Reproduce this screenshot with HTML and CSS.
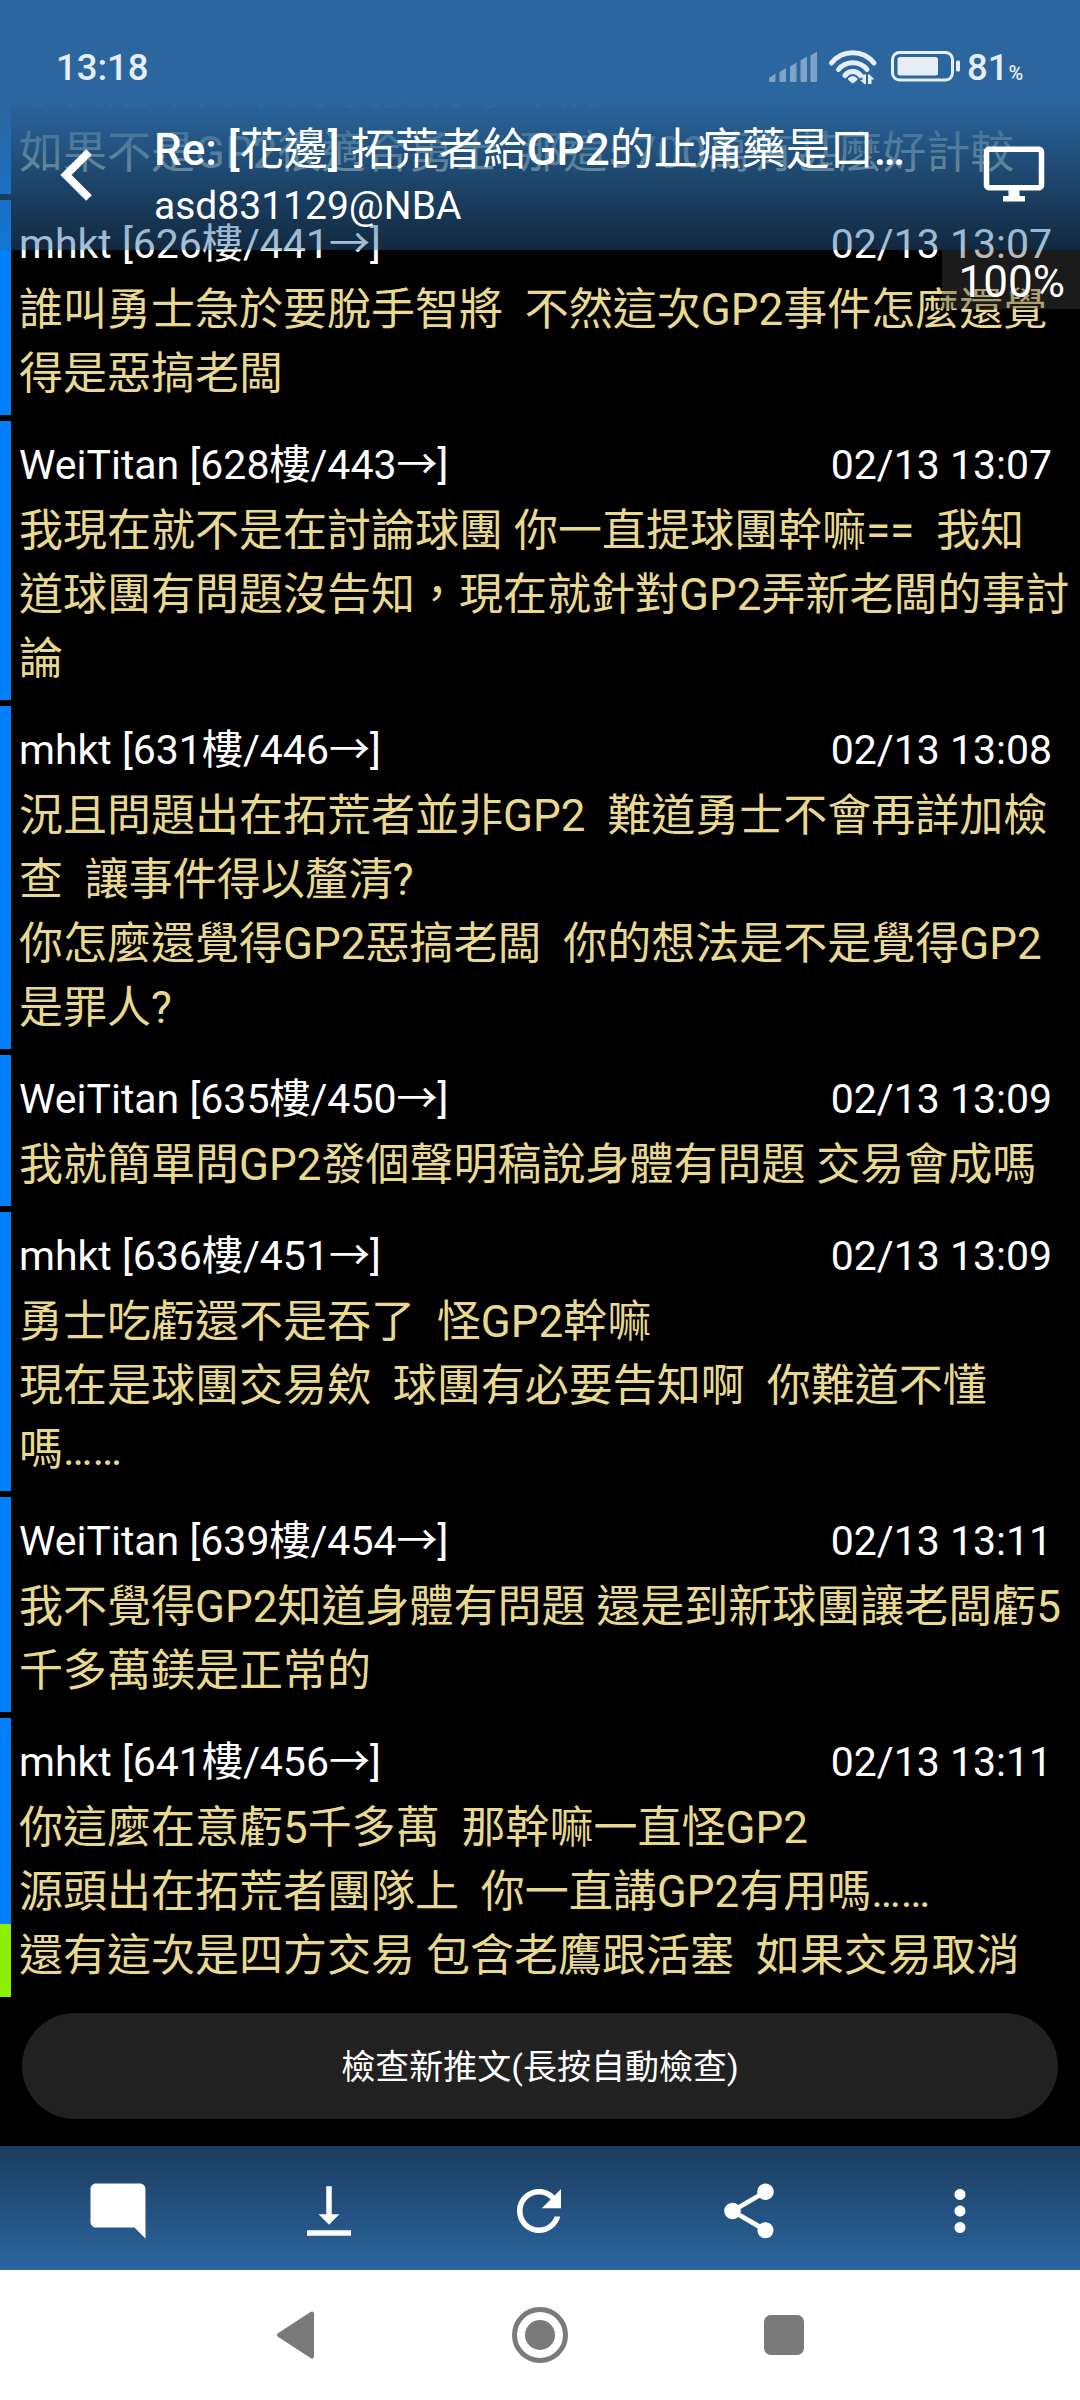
FILE: index.html
```html
<!DOCTYPE html>
<html lang="zh-Hant">
<head>
<meta charset="utf-8">
<title>NBA</title>
<link rel="stylesheet" href="styles.css">
</head>
<body>
<div class="screen">
  <main class="list">
    <article class="post post-first">
      <p class="post-text">于資尼年內未買 就要有家年院
如果不是GP2很適合勇士  那這5700萬有甚麼好計較</p>
    </article>
    <article class="post">
      <header class="post-head"><span>mhkt [626樓/441→]</span><time>02/13 13:07</time></header>
      <p class="post-text">誰叫勇士急於要脫手智將  不然這次GP2事件怎麼還覺
得是惡搞老闆</p>
    </article>
    <article class="post">
      <header class="post-head"><span>WeiTitan [628樓/443→]</span><time>02/13 13:07</time></header>
      <p class="post-text">我現在就不是在討論球團 你一直提球團幹嘛==  我知
道球團有問題沒告知，現在就針對GP2弄新老闆的事討
論</p>
    </article>
    <article class="post">
      <header class="post-head"><span>mhkt [631樓/446→]</span><time>02/13 13:08</time></header>
      <p class="post-text">況且問題出在拓荒者並非GP2  難道勇士不會再詳加檢
查  讓事件得以釐清?
你怎麼還覺得GP2惡搞老闆  你的想法是不是覺得GP2
是罪人?</p>
    </article>
    <article class="post">
      <header class="post-head"><span>WeiTitan [635樓/450→]</span><time>02/13 13:09</time></header>
      <p class="post-text">我就簡單問GP2發個聲明稿說身體有問題 交易會成嗎</p>
    </article>
    <article class="post">
      <header class="post-head"><span>mhkt [636樓/451→]</span><time>02/13 13:09</time></header>
      <p class="post-text">勇士吃虧還不是吞了  怪GP2幹嘛
現在是球團交易欸  球團有必要告知啊  你難道不懂
嗎……</p>
    </article>
    <article class="post">
      <header class="post-head"><span>WeiTitan [639樓/454→]</span><time>02/13 13:11</time></header>
      <p class="post-text">我不覺得GP2知道身體有問題 還是到新球團讓老闆虧5
千多萬鎂是正常的</p>
    </article>
    <article class="post">
      <header class="post-head"><span>mhkt [641樓/456→]</span><time>02/13 13:11</time></header>
      <p class="post-text">你這麼在意虧5千多萬  那幹嘛一直怪GP2
源頭出在拓荒者團隊上  你一直講GP2有用嗎……
還有這次是四方交易 包含老鷹跟活塞  如果交易取消</p>
    </article>
    <div class="progress"></div>
    <div class="zoom-badge">100%</div>
  </main>

  <div class="check"><button class="check-btn">檢查新推文(長按自動檢查)</button></div>

  <nav class="toolbar">
    <svg class="tool" viewBox="0 0 24 24"><path d="M21.99 4c0-1.100-.89-2-1.990-2H4c-1.100 0-2 .9-2 2v12c0 1.100.9 2 2 2h14l4 4-.01-18z"/></svg>
    <svg class="tool" viewBox="0 0 24 24"><path d="M15.800 13.200H13V3h-2v10.200H8.200L12 17zM4 19v2h16v-2H4z"/></svg>
    <svg class="tool" viewBox="0 0 24 24"><path d="M17.65 6.350C16.200 4.900 14.210 4 12 4c-4.420 0-7.990 3.580-7.990 8s3.570 8 7.990 8c3.730 0 6.840-2.550 7.730-6h-2.080c-.82 2.330-3.040 4-5.650 4-3.310 0-6-2.690-6-6s2.690-6 6-6c1.660 0 3.140.69 4.220 1.780L13 11h7V4l-2.350 2.350z"/></svg>
    <svg class="tool" viewBox="0 0 24 24"><path d="M18 16.080c-.76 0-1.440.3-1.960.77L8.910 12.700c.05-.23.09-.46.09-.7s-.04-.47-.09-.7l7.050-4.110c.54.5 1.250.81 2.040.81 1.660 0 3-1.340 3-3s-1.340-3-3-3-3 1.340-3 3c0 .24.04.47.09.7L8.040 9.810C7.500 9.310 6.790 9 6 9c-1.660 0-3 1.340-3 3s1.340 3 3 3c.79 0 1.500-.31 2.040-.81l7.120 4.160c-.05.21-.08.43-.08.65 0 1.610 1.310 2.920 2.920 2.920s2.920-1.310 2.920-2.920-1.310-2.920-2.920-2.920z"/></svg>
    <svg class="tool" viewBox="0 0 24 24"><path d="M12 8c1.100 0 2-.9 2-2s-.9-2-2-2-2 .9-2 2 .9 2 2 2zm0 2c-1.100 0-2 .9-2 2s.9 2 2 2 2-.9 2-2-.9-2-2-2zm0 6c-1.100 0-2 .9-2 2s.9 2 2 2 2-.9 2-2-.9-2-2-2z"/></svg>
  </nav>

  <footer class="sysnav">
    <svg class="sys" viewBox="0 0 60 60"><path d="M13 30L46 8.500V51.500Z" stroke-width="4" stroke-linejoin="round"/></svg>
    <svg class="sys" viewBox="0 0 60 60"><circle cx="30" cy="30" r="25.500" fill="none" stroke-width="5"/><circle cx="30" cy="30" r="15"/></svg>
    <svg class="sys" viewBox="0 0 60 60"><rect x="10" y="10" width="40" height="40" rx="7"/></svg>
  </footer>

  <div class="top">
    <div class="status">
      <span class="clock">13:18</span>
      <svg class="status-icons" viewBox="0 0 196 42">
        <g class="dim">
          <path d="M2.500 36q-1.500 0-1.500-1.500v-2.500l6.500-4.500v7q0 1.500-1.500 1.500z"/>
          <path d="M13 36q-1.500 0-1.500-1.500v-8.500l6.500-4v12.500q0 1.500-1.500 1.500z"/>
          <path d="M23.500 36q-1.500 0-1.500-1.500v-14l6.500-4v18q0 1.500-1.500 1.500z"/>
          <path d="M34 36q-1.500 0-1.500-1.500v-20l6.500-4v24q0 1.500-1.500 1.500z"/>
          <path d="M44 36q-1.500 0-1.500-1.500v-25l6.500-4v29q0 1.500-1.500 1.500z"/>
        </g>
        <g class="wave">
          <path d="M63.500 17A27 27 0 0 1 106 17"/>
          <path d="M70.500 23.500A18.500 18.500 0 0 1 99 23.500"/>
          <path d="M77 29.500A9.500 9.500 0 0 1 92.500 29.500"/>
        </g>
        <path class="lit" d="M80 32.500q4.700-5 9.500 0q1 1-4.700 5q-5.800-4-4.800-5z"/>
        <path class="lit" d="M92 34h2.500v-5.500h3.500v9.500h-1.500zM100 38v-9.500h1.500l5 5H103.500v4.500z"/>
        <rect class="cell" x="124.500" y="6.500" width="60" height="27.500" rx="7"/>
        <rect class="lit" x="129.500" y="11" width="40.500" height="18.500" rx="2.500"/>
        <rect class="lit" x="188" y="14.500" width="4" height="11" rx="1.500"/>
      </svg>
      <span class="pct">81<small>%</small></span>
    </div>
    <div class="appbar">
      <svg class="back" viewBox="0 0 34 52"><path d="M29 3L6 26L29 49"/></svg>
      <div class="titles">
        <h1>Re: [<span>花邊</span>] <span>拓荒者給</span>GP2<span>的止痛藥是口</span>…</h1>
        <h2>asd831129@NBA</h2>
      </div>
      <svg class="monitor" viewBox="0 0 24 24"><path d="M21 2H3c-1.100 0-2 .9-2 2v12c0 1.100.9 2 2 2h7v2H8v2h8v-2h-2v-2h7c1.100 0 2-.9 2-2V4c0-1.100-.9-2-2-2zm0 14H3V4h18v12z"/></svg>
    </div>
  </div>
</div>
</body>
</html>
```
FILE: styles.css
```css
* { box-sizing: border-box; }
body {
  margin: 0;
  background: #000;
  font-family: Roboto, "Noto Sans CJK TC", sans-serif;
}
h1, h2, p { margin: 0; font-weight: 400; }
.screen {
  position: relative;
  width: 1080px;
  height: 2400px;
  display: flex;
  flex-direction: column;
  overflow: hidden;
}
.list {
  position: relative;
  height: 1997px;
  display: flex;
  flex-direction: column;
  gap: 6px;
  overflow: hidden;
}
.post {
  flex: none;
  padding: 20px 28px 9px 8px;
  border-left: 11px solid #0080ff;
}
.post-first { height: 194px; padding-top: 57px; }
.post-head {
  display: flex;
  justify-content: space-between;
  margin-bottom: 10px;
  color: #fff;
  font-size: 41px;
  line-height: 48px;
  white-space: pre;
}
.post-text {
  color: #e8d98f;
  font-size: 44px;
  line-height: 64px;
  white-space: pre;
}
.progress {
  position: absolute;
  left: 0;
  bottom: 0;
  width: 11px;
  height: 73px;
  background: #8cf000;
}
.zoom-badge {
  position: absolute;
  right: 0;
  top: 250px;
  width: 138px;
  height: 59px;
  padding-right: 15px;
  background: rgba(70, 70, 70, .38);
  color: #fff;
  font-size: 44px;
  line-height: 65px;
  text-align: right;
}
.check { height: 149px; padding: 16px 22px 27px; }
.check-btn {
  width: 100%;
  height: 106px;
  padding: 0 0 3px;
  border: 0;
  border-radius: 53px;
  background: #212121;
  color: #fff;
  font: 34px Roboto, "Noto Sans CJK TC", sans-serif;
}
.toolbar {
  height: 124px;
  padding: 6px 15px 0 13px;
  display: flex;
  justify-content: space-around;
  align-items: center;
  background: linear-gradient(#1b3c5e, #2b659e);
}
.tool { width: 66px; height: 66px; fill: #fff; }
.sysnav {
  height: 130px;
  display: flex;
  justify-content: center;
  align-items: center;
  gap: 184px;
  background: #fff;
}
.sys { width: 60px; height: 60px; fill: #7a7a7a; stroke: #7a7a7a; stroke-width: 0; }
.top {
  position: absolute;
  inset: 0 0 auto;
  height: 250px;
  background: linear-gradient(#2b669e 100px, rgba(43, 102, 158, .4));
  color: #fff;
}
.status {
  height: 100px;
  padding: 46px 55px 0 56px;
  display: flex;
  color: #e8eef8;
  font-size: 36.5px;
  font-weight: 500;
  line-height: 44px;
}
.clock { margin-right: auto; }
.status-icons { width: 196px; height: 42px; margin-right: 3px; }
.dim { fill: #7ea3c9; }
.wave { fill: none; stroke: #e8eef8; stroke-width: 5; stroke-linecap: round; }
.lit { fill: #e8eef8; }
.cell { fill: none; stroke: #e8eef8; stroke-width: 3; }
.pct { width: 58px; white-space: nowrap; }
.pct small { font-size: 20px; line-height: 1; }
.appbar { height: 150px; display: flex; }
.back { width: 34px; height: 52px; margin: 49px 0 0 60px; fill: none; stroke: #fff; stroke-width: 8; }
.titles { margin: 21px 0 0 60px; width: 780px; }
h1 { font-size: 44px; font-weight: 500; line-height: 58px; white-space: pre; }
h1 span { font-weight: 400; }
h2 { font-size: 39px; line-height: 54px; }
.monitor { width: 66px; height: 66px; margin: 41px 33px 0 auto; fill: #fff; }
```
